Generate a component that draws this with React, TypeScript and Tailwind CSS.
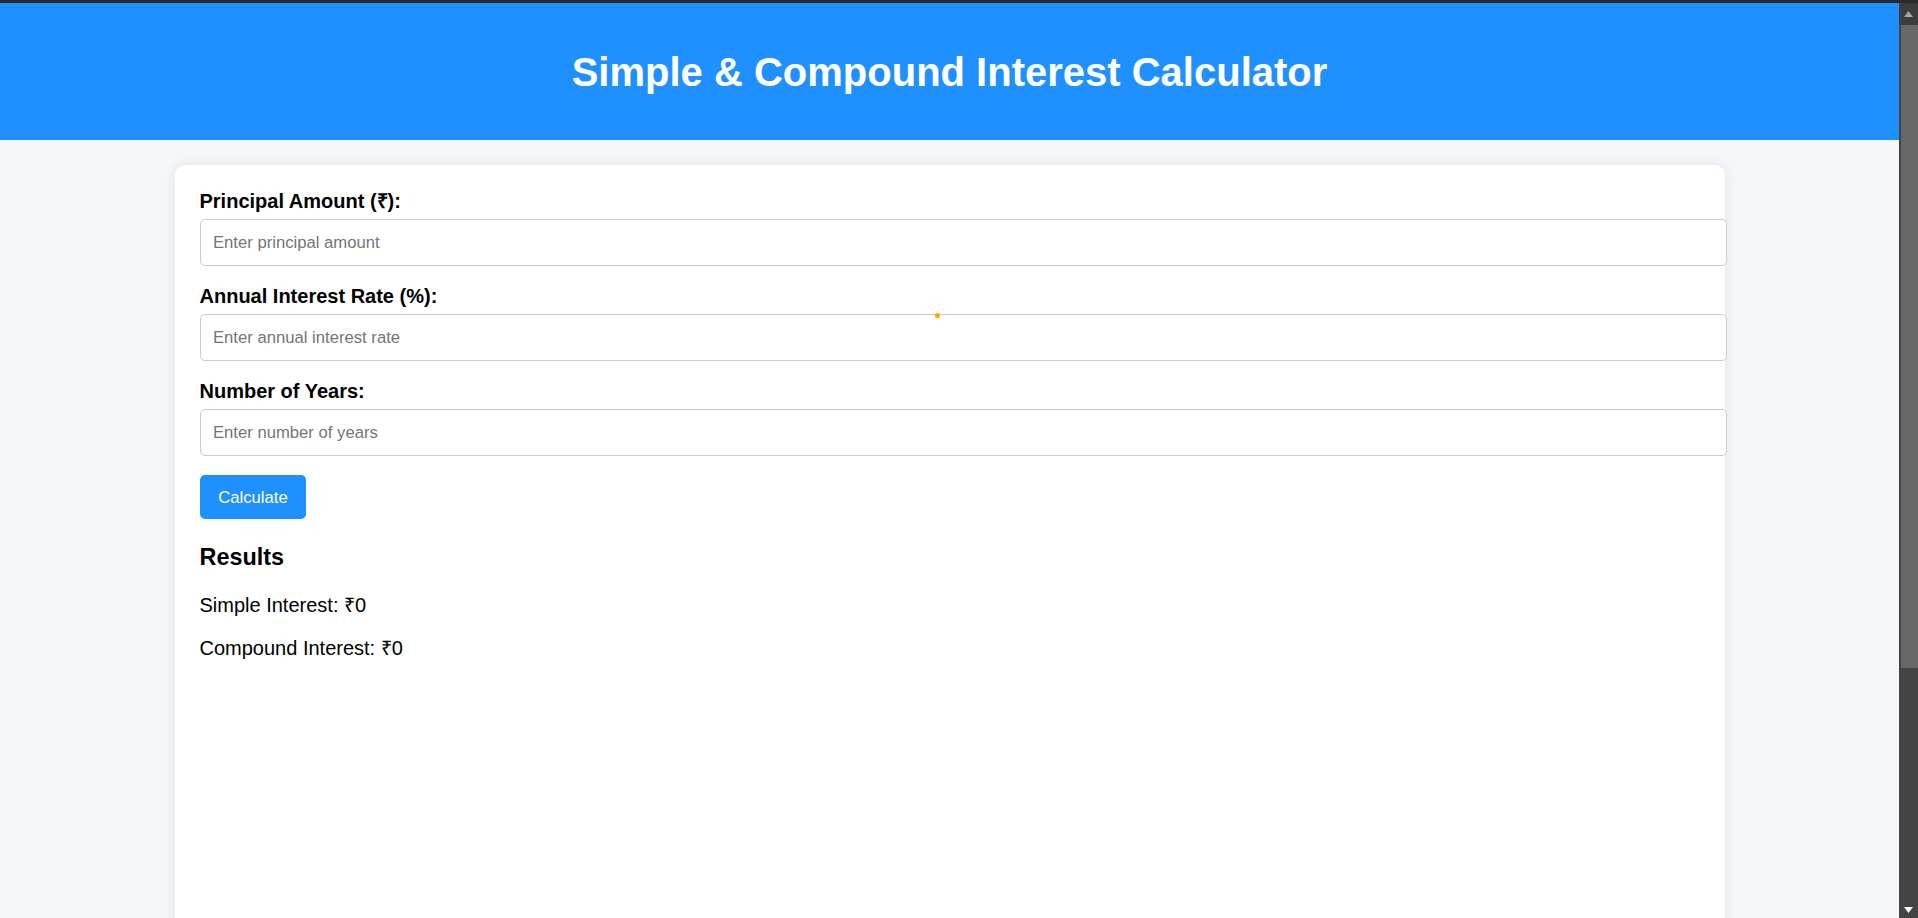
import React, { useState } from 'react';

const font = { fontFamily: '"Liberation Sans", Arial, sans-serif' };

const Field: React.FC<{ label: string; placeholder: string; value: string; onChange: (v: string) => void }> = ({
  label,
  placeholder,
  value,
  onChange,
}) => (
  <div>
    <label className="block text-[20px] font-bold leading-[23px] mb-[6.25px] text-black">{label}</label>
    <input
      type="number"
      value={value}
      placeholder={placeholder}
      onChange={(e) => onChange(e.target.value)}
      className="block w-[calc(100%+27px)] h-[47px] px-[12.5px] mb-[18.75px] border border-[#cccccc] rounded-[5px] text-[16.67px] text-black placeholder:text-[#757575] outline-none bg-white"
    />
  </div>
);

export default function App() {
  const [principal, setPrincipal] = useState('');
  const [rate, setRate] = useState('');
  const [years, setYears] = useState('');
  const [simple, setSimple] = useState(0);
  const [compound, setCompound] = useState(0);

  const calculate = () => {
    const p = parseFloat(principal) || 0;
    const r = parseFloat(rate) || 0;
    const t = parseFloat(years) || 0;
    setSimple(Number(((p * r * t) / 100).toFixed(2)));
    setCompound(Number((p * Math.pow(1 + r / 100, t) - p).toFixed(2)));
  };

  return (
    <div className="h-[918px] flex flex-col overflow-hidden" style={font}>
      <div className="h-[3px] bg-[#2b2b2b] shrink-0" />
      <div className="flex flex-1 min-h-0">
        <main className="flex-1 bg-[#f5f6fa] overflow-hidden">
          <header className="h-[137px] bg-[#1e90ff] flex items-center justify-center">
            <h1 className="text-[40px] font-bold leading-[46px] text-white">Simple &amp; Compound Interest Calculator</h1>
          </header>

          <div className="relative mt-[25px] mx-auto w-[1550px] h-[900px] bg-white rounded-[10px] shadow-[0_0_12px_rgba(0,0,0,0.08)] p-[25px]">
            <Field label="Principal Amount (₹):" placeholder="Enter principal amount" value={principal} onChange={setPrincipal} />
            <Field label="Annual Interest Rate (%):" placeholder="Enter annual interest rate" value={rate} onChange={setRate} />
            <Field label="Number of Years:" placeholder="Enter number of years" value={years} onChange={setYears} />

            <button
              onClick={calculate}
              className="h-[44px] px-[18.75px] rounded-[5px] bg-[#1e90ff] text-white text-[16.67px]"
            >
              Calculate
            </button>

            <div className="mt-[25px]">
              <h3 className="text-[23.4px] font-bold leading-[27px] mb-[23px] text-black">Results</h3>
              <p className="text-[20px] leading-[23px] mb-[20px] text-black">Simple Interest: ₹{simple}</p>
              <p className="text-[20px] leading-[23px] text-black">Compound Interest: ₹{compound}</p>
            </div>

            <span className="absolute left-[760px] top-[148px] w-[5px] h-[5px] rounded-full bg-[#ffa500]" />
          </div>
        </main>

        <div className="w-[19px] shrink-0 bg-[#444444] flex flex-col">
          <div className="h-[22px] bg-[#3c3c3c] flex items-center justify-center">
            <svg width="9" height="6" viewBox="0 0 9 6"><path d="M4.5 0L9 6H0z" fill="#a3a3a3" /></svg>
          </div>
          <div className="h-[643px] ml-[2px] bg-[#686868]" />
          <div className="flex-1" />
          <div className="h-[16px] flex items-center justify-center">
            <svg width="9" height="6" viewBox="0 0 9 6"><path d="M0 0H9L4.5 6z" fill="#ffffff" /></svg>
          </div>
        </div>
      </div>
    </div>
  );
}
